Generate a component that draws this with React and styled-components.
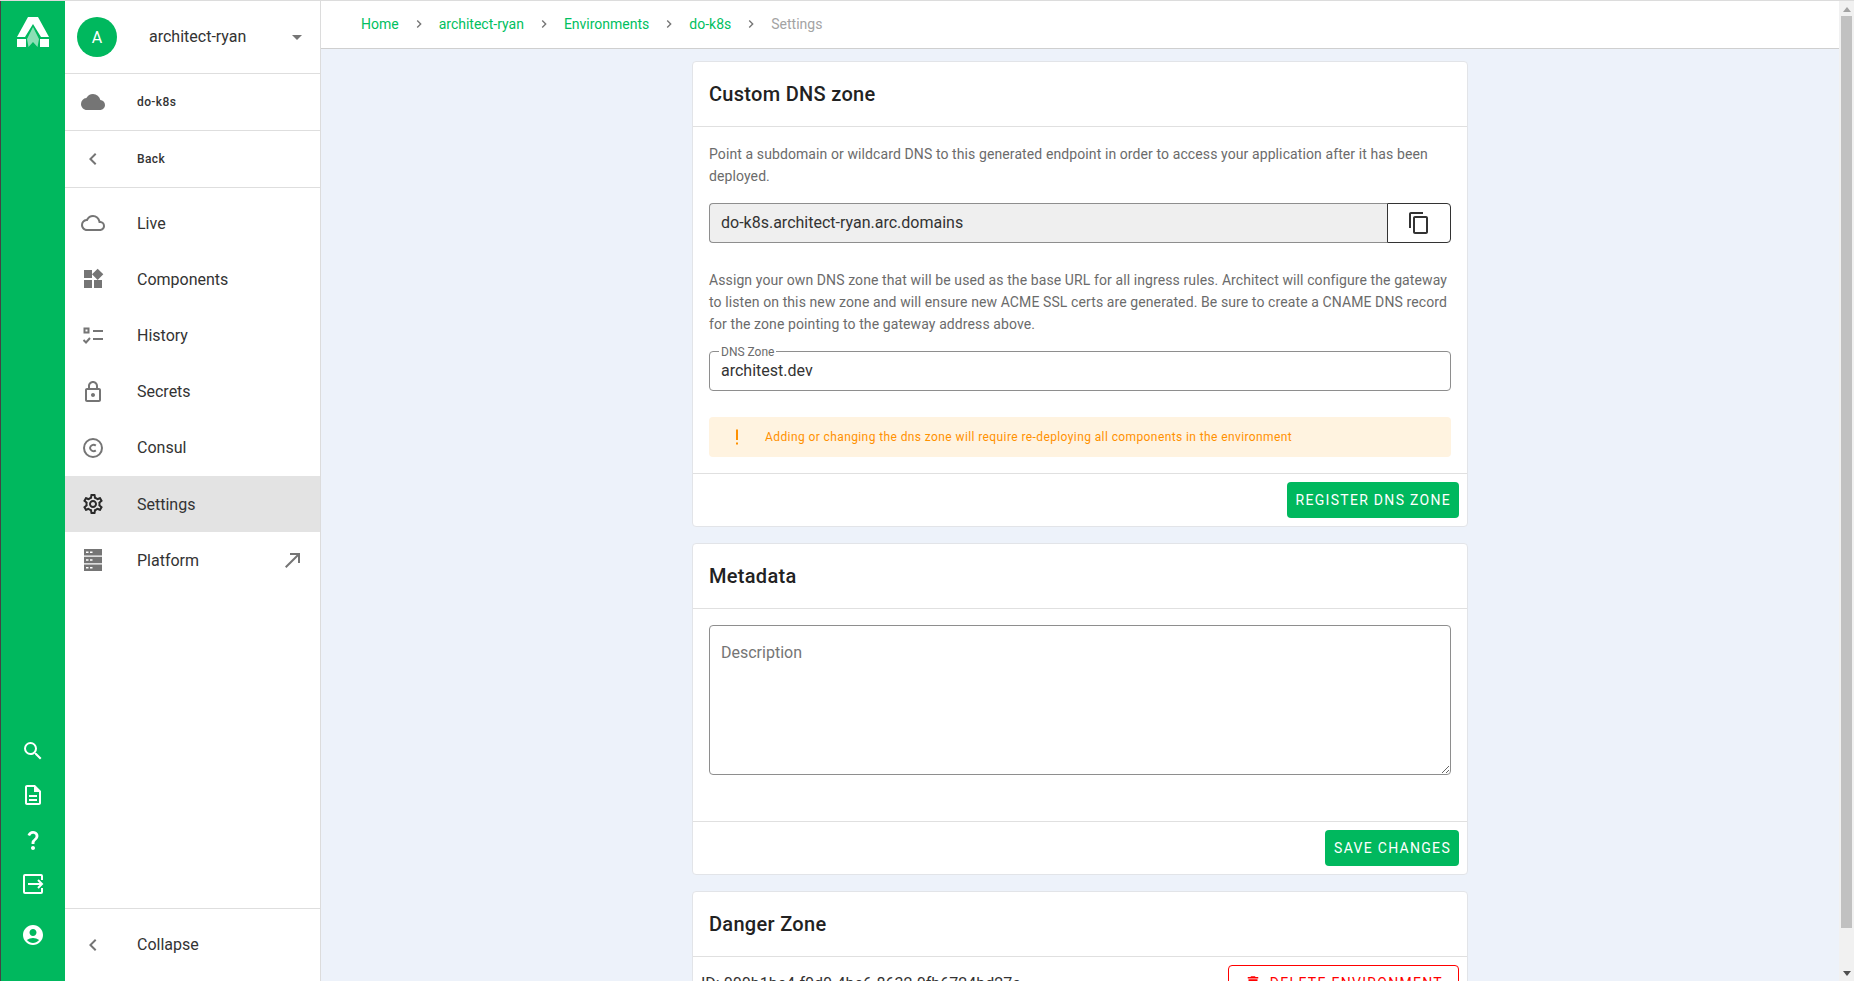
import React from 'react'
import styled, { createGlobalStyle } from 'styled-components'
import {
  MdCloud,
  MdChevronLeft,
  MdChevronRight,
  MdOutlineCloud,
  MdWidgets,
  MdOutlineLock,
  MdOutlineSettings,
  MdNorthEast,
  MdSearch,
  MdOutlineDescription,
  MdQuestionMark,
  MdAccountCircle,
  MdContentCopy,
  MdDelete,
} from 'react-icons/md'

const GREEN = '#00b85e'

const GlobalStyle = createGlobalStyle`
  html, body {
    margin: 0;
    height: 100%;
    overflow: hidden;
    font-family: Roboto, "Liberation Sans", sans-serif;
    background: #edf2fa;
  }
  * { box-sizing: border-box; }
`

const Page = styled.div`
  display: flex;
  height: 981px;
  overflow: hidden;
  border-top: 1px solid #dcdcdc;
`

//left green rail
const Rail = styled.aside`
  width: 65px;
  flex: none;
  display: flex;
  flex-direction: column;
  align-items: center;
  background: ${GREEN};
  border-left: 1px solid #444;
  color: #fff;
  padding: 16px 0 24px;
`

const RailSpacer = styled.div`
  flex: 1;
`

const RailButton = styled.div`
  width: 100%;
  height: 44.5px;
  display: flex;
  align-items: center;
  justify-content: center;
  margin-top: ${p => p.$gap || 0}px;
  font-size: 24px;
`

//sidebar
const Sidebar = styled.nav`
  width: 256px;
  flex: none;
  display: flex;
  flex-direction: column;
  background: #fff;
  border-right: 1px solid #dcdcdc;
`

const AccountRow = styled.div`
  height: 73px;
  flex: none;
  display: flex;
  align-items: center;
  padding: 0 18px 0 12px;
  border-bottom: 1px solid #dedede;
  color: #333;
  font-size: 16px;
`

const Avatar = styled.div`
  width: 40px;
  height: 40px;
  flex: none;
  border-radius: 50%;
  background: ${GREEN};
  color: #fff;
  display: flex;
  align-items: center;
  justify-content: center;
  font-size: 16px;
  margin-right: 32px;
`

const AccountName = styled.span`
  flex: 1;
  margin-top: -1px;
`

const Caret = styled.span`
  width: 0;
  height: 0;
  border-left: 5px solid transparent;
  border-right: 5px solid transparent;
  border-top: 5px solid #757575;
`

const ContextRow = styled.div`
  height: 57px;
  flex: none;
  display: flex;
  align-items: center;
  padding-left: 16px;
  border-bottom: 1px solid #dedede;
  font-size: 12px;
  font-weight: 500;
  letter-spacing: 0.4px;
  color: #333;
`

const IconSlot = styled.span`
  width: 56px;
  flex: none;
  display: flex;
  align-items: center;
  font-size: 24px;
  color: ${p => (p.$active ? '#2a2a2a' : '#757575')};
`

const NavList = styled.div`
  flex: 1;
  padding-top: 7px;
`

const NavRow = styled.div`
  height: 56.2px;
  display: flex;
  align-items: center;
  padding: 0 16px;
  font-size: 16px;
  color: #333;
  background: ${p => (p.$active ? '#e3e3e3' : 'transparent')};
`

const NavLabel = styled.span`
  flex: 1;
`

const ExternalIcon = styled.span`
  display: flex;
  font-size: 24px;
  color: #757575;
  margin-right: -1px;
`

const CollapseRow = styled.div`
  height: 73px;
  flex: none;
  display: flex;
  align-items: center;
  padding: 0 0 1px 16px;
  border-top: 1px solid #dedede;
  font-size: 16px;
  color: #333;
`

//main column
const Main = styled.main`
  flex: 1;
  min-width: 0;
  display: flex;
  flex-direction: column;
`

const TopBar = styled.div`
  height: 48px;
  flex: none;
  display: flex;
  align-items: center;
  padding: 0 0 2px 40px;
  background: #fff;
  border-bottom: 1px solid #cfcfcf;
  font-size: 14px;
`

const Crumb = styled.span`
  color: ${p => (p.$current ? '#a3a3a3' : '#00c060')};
`

const CrumbSep = styled.span`
  width: 40px;
  display: flex;
  align-items: center;
  justify-content: center;
  color: #757575;
  font-size: 16px;
`

const Content = styled.div`
  flex: 1;
  min-height: 0;
  overflow: hidden;
  padding-top: 12px;
`

const Card = styled.section`
  width: 776px;
  margin: 0 auto 16px;
  background: #fff;
  border: 1px solid #e2e4e8;
  border-radius: 4px;
`

const CardHeader = styled.h2`
  margin: 0;
  height: 65px;
  display: flex;
  align-items: center;
  padding: 0 16px;
  border-bottom: 1px solid #e0e0e0;
  font-size: 20px;
  font-weight: 500;
  letter-spacing: 0.3px;
  color: #222;
`

const CardBody = styled.div`
  padding: 16px 16px ${p => p.$bottom ?? 16}px;
`

const CardActions = styled.div`
  display: flex;
  justify-content: flex-end;
  padding: 8px;
  border-top: 1px solid #e0e0e0;
`

const Help = styled.p`
  margin: ${p => p.$top || 0}px 0 0;
  font-size: 14px;
  line-height: 22px;
  letter-spacing: 0.1px;
  color: #6b6b6b;
`

const CopyField = styled.div`
  display: flex;
  height: 40px;
  margin-top: 16px;
`

const ReadOnlyInput = styled.input`
  flex: 1;
  min-width: 0;
  height: 100%;
  padding: 0 11px 2px;
  background: #efefef;
  border: 1px solid #8e8e8e;
  border-right: 0;
  border-radius: 4px 0 0 4px;
  font: 400 16px Roboto, sans-serif;
  color: #333;
  outline: none;
`

const CopyButton = styled.button`
  width: 64px;
  flex: none;
  display: flex;
  align-items: center;
  justify-content: center;
  padding: 0;
  background: #fff;
  border: 1px solid #333;
  border-radius: 0 4px 4px 0;
  color: #333;
  font-size: 24px;
`

const Field = styled.div`
  position: relative;
  margin-top: 16px;
`

const FieldLabel = styled.label`
  position: absolute;
  top: -6px;
  left: 10px;
  padding: 0 2px;
  background: #fff;
  font-size: 12px;
  line-height: 14px;
  color: #6b6b6b;
`

const TextInput = styled.input`
  display: block;
  width: 100%;
  height: 40px;
  padding: 0 11px 1px;
  background: #fff;
  border: 1px solid #8e8e8e;
  border-radius: 4px;
  font: 400 16px Roboto, sans-serif;
  color: #333;
  outline: none;
`

const TextArea = styled.textarea`
  display: block;
  width: 100%;
  height: 150px;
  padding: 17px 11px;
  border: 1px solid #8e8e8e;
  border-radius: 4px;
  font: 400 16px/20px Roboto, sans-serif;
  color: #333;
  outline: none;
  &::placeholder { color: #757575; opacity: 1; }
`

const Alert = styled.div`
  height: 40px;
  margin-top: 26px;
  display: flex;
  align-items: center;
  padding-left: 16px;
  background: #fff3e0;
  border-radius: 4px;
  color: #ff9100;
  font-size: 12px;
  letter-spacing: 0.4px;
`

const AlertIcon = styled.span`
  width: 40px;
  display: flex;
  padding-left: 4px;
`

const Button = styled.button`
  height: 36px;
  display: inline-flex;
  align-items: center;
  gap: 8px;
  padding: ${p => (p.$danger ? '0 15px' : '0 8px 0 9px')};
  background: ${p => (p.$danger ? '#fff' : GREEN)};
  border: ${p => (p.$danger ? '1px solid #f00' : '0')};
  border-radius: 4px;
  color: ${p => (p.$danger ? '#f00' : '#fff')};
  font: 400 14px Roboto, sans-serif;
  letter-spacing: 1.3px;
  text-transform: uppercase;
`

const DangerRow = styled.div`
  display: flex;
  align-items: center;
  justify-content: space-between;
  padding: 8px;
`

const EntityId = styled.span`
  font-size: 16px;
  color: #333;
`

//fake browser scrollbar, it is part of the picture
const ScrollTrack = styled.div`
  width: 15px;
  flex: none;
  display: flex;
  flex-direction: column;
  align-items: center;
  background: #f1f1f1;
`

const ScrollArrow = styled.span`
  flex: none;
  width: 0;
  height: 0;
  margin: ${p => (p.$down ? '0 0 5px' : '6px 0 4px')};
  border-left: 4px solid transparent;
  border-right: 4px solid transparent;
  ${p => (p.$down ? 'border-top: 5px solid #505050;' : 'border-bottom: 5px solid #a3a3a3;')}
`

const ScrollThumb = styled.div`
  width: 11px;
  height: 912px;
  background: #c1c1c1;
`

const ScrollRest = styled.div`
  flex: 1;
`

const Logo = () => (
  <svg width="32" height="30" viewBox="0 0 32 30">
    <path fill="#fff" d="M11 0h10l11 20h-8L16 7 8 20H0z" />
    <path fill="#fff" d="M0 22h9v8H0zM23 22h9v8h-9z" />
    <path fill="#fff" fillOpacity=".55" d="M16 10l6 12-1.5 8L16 25l-4.5 5-1.5-8z" />
  </svg>
)

const ExitIcon = () => (
  <svg width="24" height="24" viewBox="0 0 24 24" fill="none" stroke="#fff" strokeWidth="2">
    <path d="M21 8V4a1 1 0 0 0-1-1H4a1 1 0 0 0-1 1v16a1 1 0 0 0 1 1h16a1 1 0 0 0 1-1v-4" />
    <path d="M7 12h14M17 8l4 4-4 4" />
  </svg>
)

const HistoryIcon = () => (
  <svg width="24" height="24" viewBox="0 0 24 24" fill="none" stroke="#757575" strokeWidth="2">
    <path d="M3.5 5.5h4v4h-4zM12 8h10M12 16h10" />
    <path d="M2.5 17l2.5 2.5 4-4.5" />
  </svg>
)

const ConsulIcon = () => (
  <svg width="24" height="24" viewBox="0 0 24 24" fill="none" stroke="#757575" strokeWidth="2">
    <circle cx="12" cy="12" r="9" />
    <path d="M14.8 9.6A3.6 3.6 0 0 0 9 12a3.6 3.6 0 0 0 5.8 2.4" />
  </svg>
)

const PlatformIcon = () => (
  <svg width="24" height="24" viewBox="0 0 24 24">
    <path fill="#757575" d="M3 1h18v6.5H3zM3 8.7h18v6.5H3zM3 16.5h18V23H3z" />
    <path fill="#fff" d="M5 3.5h2.5v1.5H5zM9 3.5h2.5v1.5H9zM5 11.2h2.5v1.5H5zM9 11.2h2.5v1.5H9zM5 19h2.5v1.5H5zM9 19h2.5v1.5H9z" />
  </svg>
)

const BangIcon = () => (
  <svg width="16" height="24" viewBox="0 0 16 24" fill="#ff9100">
    <path d="M7 4.5h2v10.5H7zM7 17.5h2v2H7z" />
  </svg>
)

const crumbs = ['Home', 'architect-ryan', 'Environments', 'do-k8s']

const navItems = [
  { label: 'Live', icon: <MdOutlineCloud /> },
  { label: 'Components', icon: <MdWidgets /> },
  { label: 'History', icon: <HistoryIcon /> },
  { label: 'Secrets', icon: <MdOutlineLock /> },
  { label: 'Consul', icon: <ConsulIcon /> },
  { label: 'Settings', icon: <MdOutlineSettings />, active: true },
  { label: 'Platform', icon: <PlatformIcon />, external: true },
]

export default function App() {
  return (
    <>
      <GlobalStyle />
      <Page>
        <Rail>
          <Logo />
          <RailSpacer />
          <RailButton><MdSearch /></RailButton>
          <RailButton><MdOutlineDescription /></RailButton>
          <RailButton><MdQuestionMark /></RailButton>
          <RailButton><ExitIcon /></RailButton>
          <RailButton $gap={6}><MdAccountCircle /></RailButton>
        </Rail>

        <Sidebar>
          <AccountRow>
            <Avatar>A</Avatar>
            <AccountName>architect-ryan</AccountName>
            <Caret />
          </AccountRow>
          <ContextRow>
            <IconSlot><MdCloud /></IconSlot>
            do-k8s
          </ContextRow>
          <ContextRow>
            <IconSlot><MdChevronLeft /></IconSlot>
            Back
          </ContextRow>
          <NavList>
            {navItems.map(item => (
              <NavRow key={item.label} $active={item.active}>
                <IconSlot $active={item.active}>{item.icon}</IconSlot>
                <NavLabel>{item.label}</NavLabel>
                {item.external && <ExternalIcon><MdNorthEast /></ExternalIcon>}
              </NavRow>
            ))}
          </NavList>
          <CollapseRow>
            <IconSlot><MdChevronLeft /></IconSlot>
            Collapse
          </CollapseRow>
        </Sidebar>

        <Main>
          <TopBar>
            {crumbs.map(crumb => (
              <React.Fragment key={crumb}>
                <Crumb>{crumb}</Crumb>
                <CrumbSep><MdChevronRight /></CrumbSep>
              </React.Fragment>
            ))}
            <Crumb $current>Settings</Crumb>
          </TopBar>

          <Content>
            <Card>
              <CardHeader>Custom DNS zone</CardHeader>
              <CardBody>
                <Help>
                  Point a subdomain or wildcard DNS to this generated endpoint in order to access your
                  application after it has been deployed.
                </Help>
                <CopyField>
                  <ReadOnlyInput readOnly value="do-k8s.architect-ryan.arc.domains" />
                  <CopyButton><MdContentCopy /></CopyButton>
                </CopyField>
                <Help $top={26}>
                  Assign your own DNS zone that will be used as the base URL for all ingress rules.
                  Architect will configure the gateway to listen on this new zone and will ensure new
                  ACME SSL certs are generated. Be sure to create a CNAME DNS record for the zone
                  pointing to the gateway address above.
                </Help>
                <Field>
                  <FieldLabel>DNS Zone</FieldLabel>
                  <TextInput readOnly value="architest.dev" />
                </Field>
                <Alert>
                  <AlertIcon><BangIcon /></AlertIcon>
                  Adding or changing the dns zone will require re-deploying all components in the environment
                </Alert>
              </CardBody>
              <CardActions>
                <Button>Register DNS zone</Button>
              </CardActions>
            </Card>

            <Card>
              <CardHeader>Metadata</CardHeader>
              <CardBody $bottom={46}>
                <TextArea placeholder="Description" />
              </CardBody>
              <CardActions>
                <Button>Save changes</Button>
              </CardActions>
            </Card>

            <Card>
              <CardHeader>Danger Zone</CardHeader>
              <DangerRow>
                <EntityId>ID: 000b1be4-f0d0-4be6-8632-0fb6724bd27e</EntityId>
                <Button $danger><MdDelete size={18} />Delete environment</Button>
              </DangerRow>
            </Card>
          </Content>
        </Main>

        <ScrollTrack>
          <ScrollArrow />
          <ScrollThumb />
          <ScrollRest />
          <ScrollArrow $down />
        </ScrollTrack>
      </Page>
    </>
  )
}
